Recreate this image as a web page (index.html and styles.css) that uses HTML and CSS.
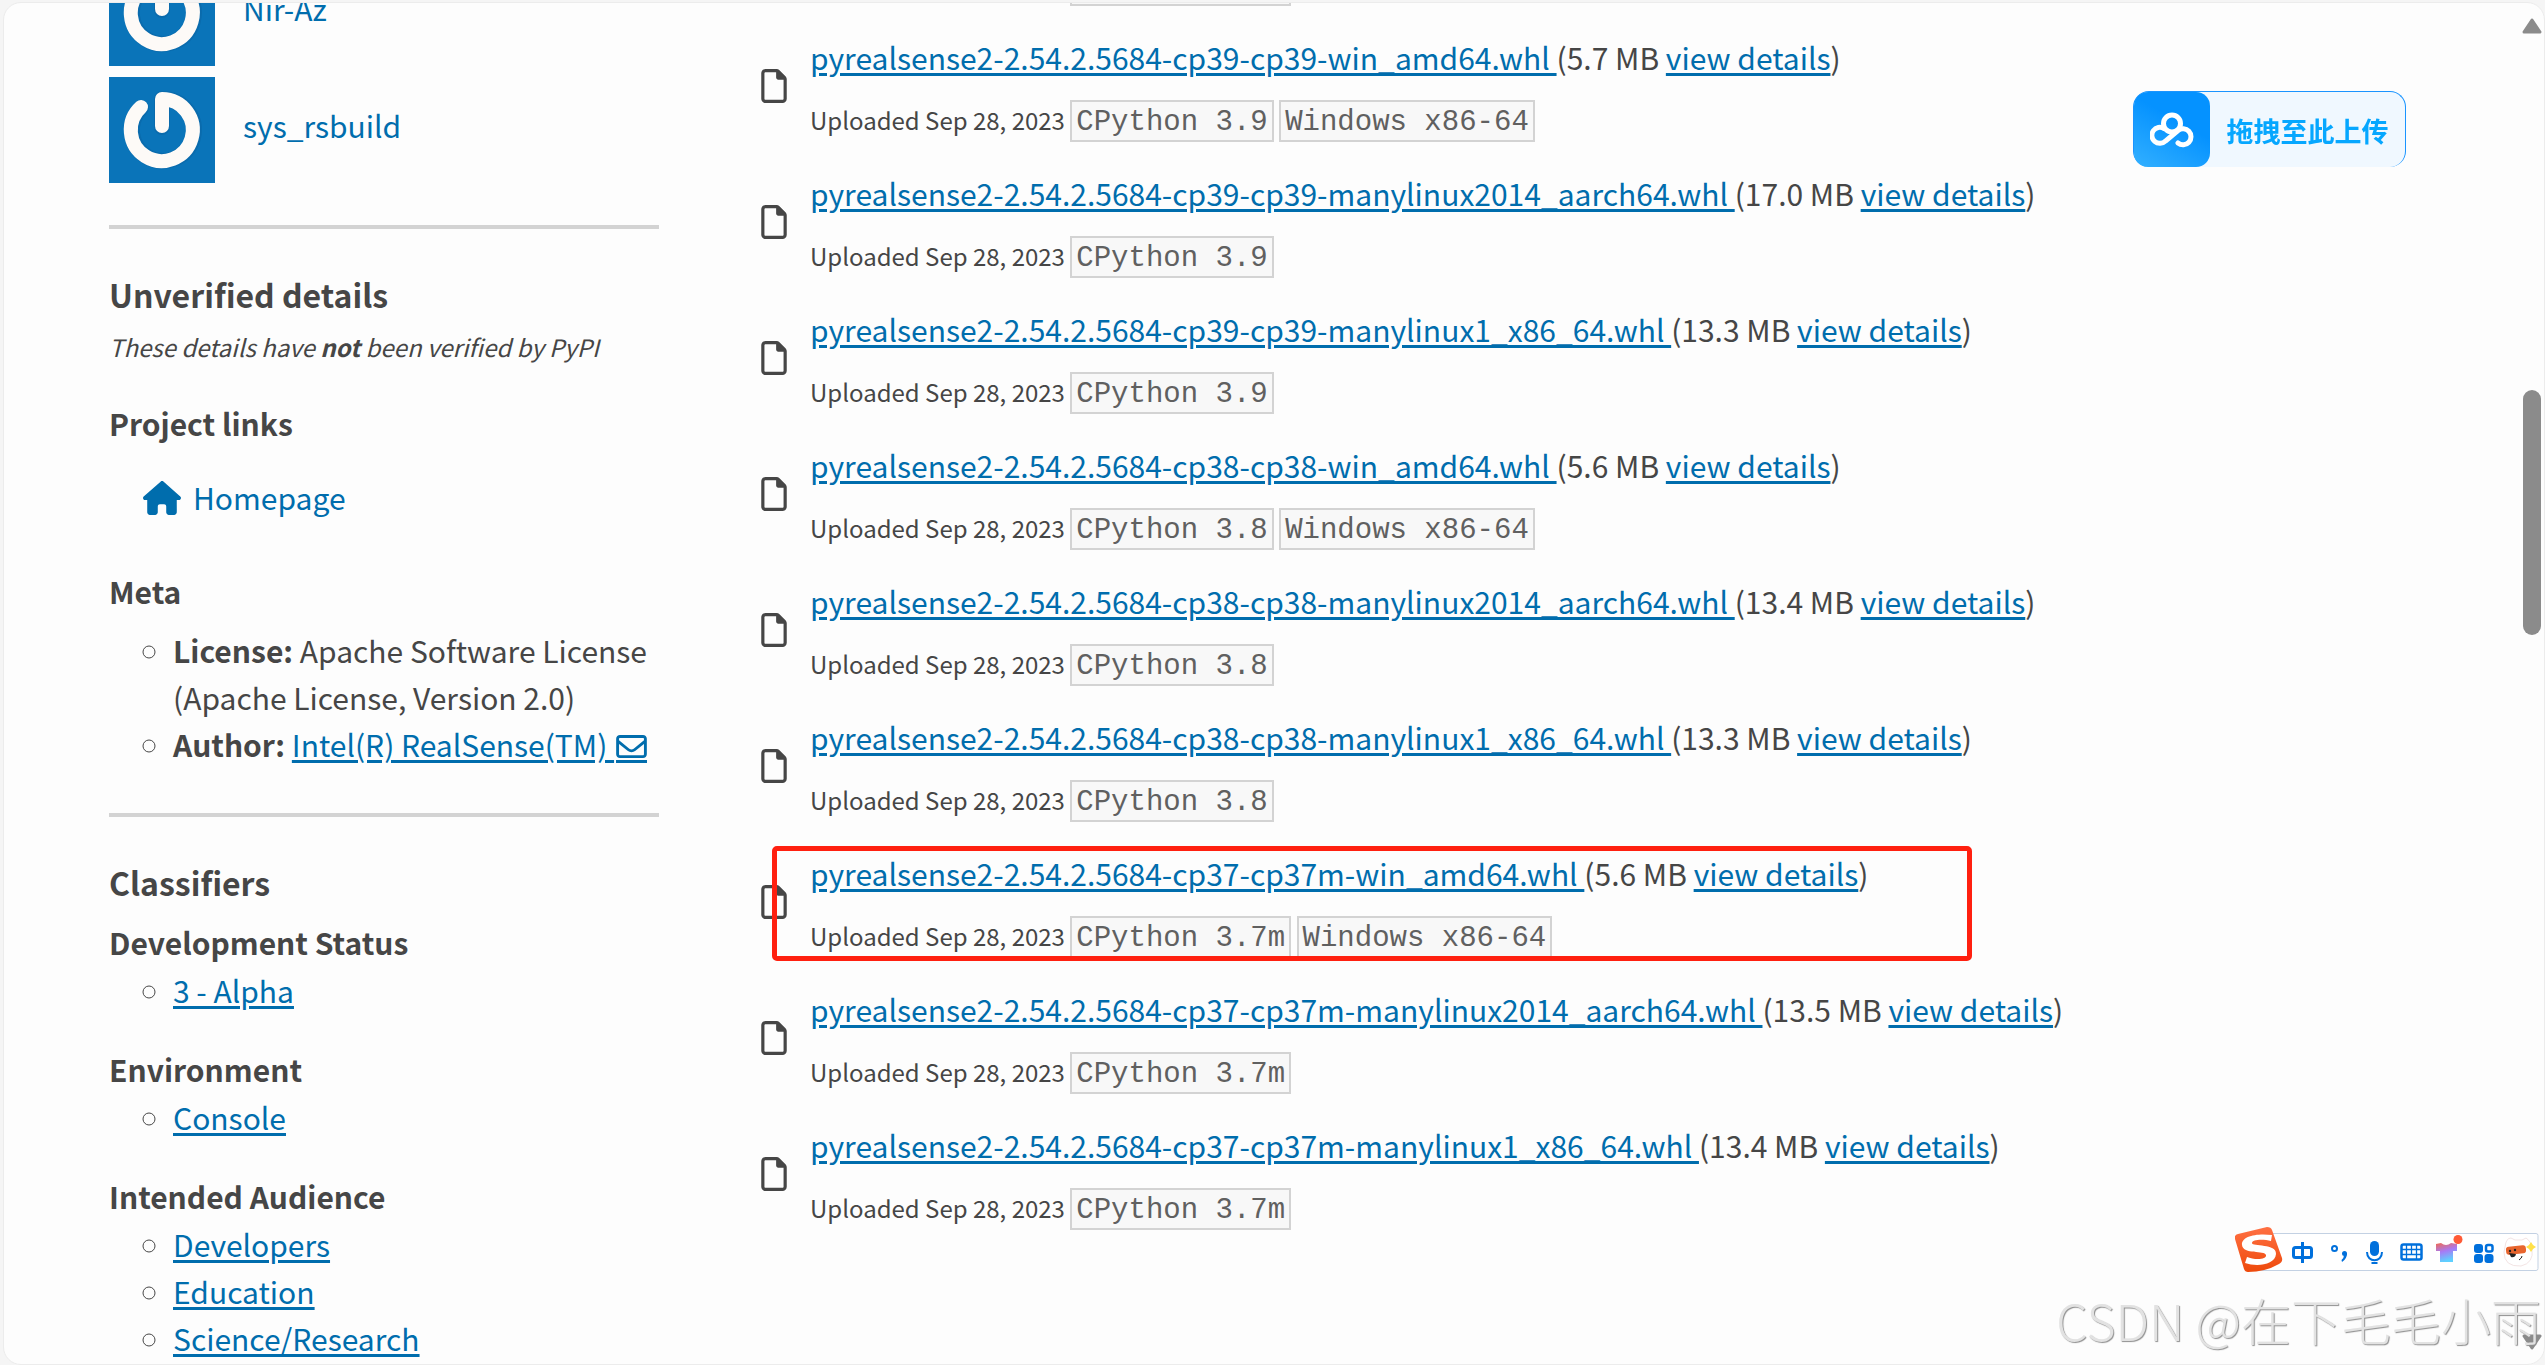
FILE: index.html
```html
<!DOCTYPE html>
<html lang="en">
<head>
<meta charset="utf-8">
<title>pyrealsense2 · PyPI</title>
<link rel="stylesheet" href="styles.css">
</head>
<body>
<svg class="defs" aria-hidden="true">
  <symbol id="file" viewBox="0 0 384 512"><path d="M320 464c8.800 0 16-7.200 16-16V160H256c-17.700 0-32-14.300-32-32V48H64c-8.800 0-16 7.200-16 16V448c0 8.800 7.200 16 16 16H320zM0 64C0 28.700 28.700 0 64 0H229.500c17 0 33.300 6.700 45.300 18.700l90.500 90.500c12 12 18.700 28.300 18.700 45.300V448c0 35.300-28.700 64-64 64H64c-35.300 0-64-28.700-64-64V64z"/></symbol>
  <symbol id="avatar" viewBox="0 0 106 106">
    <rect width="106" height="106" fill="#0a74b9"/>
    <g fill="none" stroke-linecap="round" stroke-linejoin="round">
      <path d="M32 31A31 31 0 1 0 53 22V50" stroke="#0a5f9c" stroke-width="16" opacity=".4"/>
      <path d="M32 30A31 31 0 1 0 53 22V49" stroke="#fdfaf7" stroke-width="14"/>
    </g>
  </symbol>
</svg>
<div class="window">
  <main class="page">
    <aside class="sidebar">
      <div class="people">
        <a class="person" href="#"><svg class="avatar"><use href="#avatar"/></svg><span>Nir-Az</span></a>
        <a class="person" href="#"><svg class="avatar"><use href="#avatar"/></svg><span>sys_rsbuild</span></a>
      </div>
      <section class="block">
        <h3 class="title">Unverified details</h3>
        <p class="note">These details have <strong>not</strong> been verified by PyPI</p>
        <h4 class="subtitle">Project links</h4>
        <a class="home" href="#"><svg class="home-icon" viewBox="0 0 576 512" aria-hidden="true"><path d="M575.800 255.500c0 18-15 32.100-32 32.100h-32l.7 160.200c0 2.700-.2 5.400-.5 8.100V472c0 22.100-17.900 40-40 40H392c-22.100 0-40-17.900-40-40V384c0-17.700-14.300-32-32-32H256c-17.700 0-32 14.300-32 32v88c0 22.100-17.900 40-40 40H104c-22.100 0-40-17.900-40-40V287.600H32c-18 0-32-14-32-32.100c0-9 3-17 10-24L266.400 8c7-7 15-8 22-8s15 2 21 7L564.800 231.500c8 7 12 15 11 24z"/></svg>Homepage</a>
        <h4 class="subtitle">Meta</h4>
        <ul class="list meta">
          <li><strong>License:</strong> Apache Software License (Apache License, Version 2.0)</li>
          <li><strong>Author:</strong> <a href="#">Intel(R) RealSense(TM) <svg class="mail" viewBox="0 64 512 384" aria-hidden="true"><path d="M64 112c-8.800 0-16 7.200-16 16v22.100L220.500 291.700c20.700 17 50.400 17 71.100 0L464 150.100V128c0-8.800-7.200-16-16-16H64zM48 212.200V384c0 8.800 7.200 16 16 16H448c8.800 0 16-7.200 16-16V212.200L322 328.800c-38.400 31.500-93.700 31.500-132 0L48 212.200zM0 128C0 92.700 28.700 64 64 64H448c35.300 0 64 28.700 64 64V384c0 35.300-28.700 64-64 64H64c-35.300 0-64-28.700-64-64V128z"/></svg></a></li>
        </ul>
      </section>
      <section class="block classifiers">
        <h3 class="title">Classifiers</h3>
        <h4 class="subtitle">Development Status</h4>
        <ul class="list"><li><a href="#">3 - Alpha</a></li></ul>
        <h4 class="subtitle">Environment</h4>
        <ul class="list"><li><a href="#">Console</a></li></ul>
        <h4 class="subtitle">Intended Audience</h4>
        <ul class="list">
          <li><a href="#">Developers</a></li>
          <li><a href="#">Education</a></li>
          <li><a href="#">Science/Research</a></li>
        </ul>
      </section>
    </aside>
    <section class="files">
      <p class="info previous">Uploaded Sep 28, 2023 <code>CPython 3.10</code></p>
      <article class="file">
        <svg class="file-icon"><use href="#file"/></svg>
        <div><p class="name"><a href="#">pyrealsense2-2.54.2.5684-cp39-cp39-win_amd64.whl </a>(5.7 MB <a href="#">view details</a>)</p>
        <p class="info">Uploaded Sep 28, 2023 <code>CPython 3.9</code> <code>Windows x86-64</code></p></div>
      </article>
      <article class="file">
        <svg class="file-icon"><use href="#file"/></svg>
        <div><p class="name"><a href="#">pyrealsense2-2.54.2.5684-cp39-cp39-manylinux2014_aarch64.whl </a>(17.0 MB <a href="#">view details</a>)</p>
        <p class="info">Uploaded Sep 28, 2023 <code>CPython 3.9</code></p></div>
      </article>
      <article class="file">
        <svg class="file-icon"><use href="#file"/></svg>
        <div><p class="name"><a href="#">pyrealsense2-2.54.2.5684-cp39-cp39-manylinux1_x86_64.whl </a>(13.3 MB <a href="#">view details</a>)</p>
        <p class="info">Uploaded Sep 28, 2023 <code>CPython 3.9</code></p></div>
      </article>
      <article class="file">
        <svg class="file-icon"><use href="#file"/></svg>
        <div><p class="name"><a href="#">pyrealsense2-2.54.2.5684-cp38-cp38-win_amd64.whl </a>(5.6 MB <a href="#">view details</a>)</p>
        <p class="info">Uploaded Sep 28, 2023 <code>CPython 3.8</code> <code>Windows x86-64</code></p></div>
      </article>
      <article class="file">
        <svg class="file-icon"><use href="#file"/></svg>
        <div><p class="name"><a href="#">pyrealsense2-2.54.2.5684-cp38-cp38-manylinux2014_aarch64.whl </a>(13.4 MB <a href="#">view details</a>)</p>
        <p class="info">Uploaded Sep 28, 2023 <code>CPython 3.8</code></p></div>
      </article>
      <article class="file">
        <svg class="file-icon"><use href="#file"/></svg>
        <div><p class="name"><a href="#">pyrealsense2-2.54.2.5684-cp38-cp38-manylinux1_x86_64.whl </a>(13.3 MB <a href="#">view details</a>)</p>
        <p class="info">Uploaded Sep 28, 2023 <code>CPython 3.8</code></p></div>
      </article>
      <article class="file marked">
        <svg class="file-icon"><use href="#file"/></svg>
        <div><p class="name"><a href="#">pyrealsense2-2.54.2.5684-cp37-cp37m-win_amd64.whl </a>(5.6 MB <a href="#">view details</a>)</p>
        <p class="info">Uploaded Sep 28, 2023 <code>CPython 3.7m</code> <code>Windows x86-64</code></p></div>
      </article>
      <article class="file">
        <svg class="file-icon"><use href="#file"/></svg>
        <div><p class="name"><a href="#">pyrealsense2-2.54.2.5684-cp37-cp37m-manylinux2014_aarch64.whl </a>(13.5 MB <a href="#">view details</a>)</p>
        <p class="info">Uploaded Sep 28, 2023 <code>CPython 3.7m</code></p></div>
      </article>
      <article class="file">
        <svg class="file-icon"><use href="#file"/></svg>
        <div><p class="name"><a href="#">pyrealsense2-2.54.2.5684-cp37-cp37m-manylinux1_x86_64.whl </a>(13.4 MB <a href="#">view details</a>)</p>
        <p class="info">Uploaded Sep 28, 2023 <code>CPython 3.7m</code></p></div>
      </article>
    </section>
  </main>
</div>

<div class="scrollbar" aria-hidden="true">
  <svg class="arrow" viewBox="0 0 20 18"><path d="M10 3L18 15H2Z"/></svg>
  <div class="track"><div class="thumb"></div></div>
  <svg class="arrow" viewBox="0 0 20 18"><path d="M10 15L18 3H2Z"/></svg>
</div>

<button class="upload" type="button" lang="zh-CN">
  <span class="upload-logo"><svg viewBox="0 0 44 36" aria-hidden="true"><g fill="none" stroke="#fff" stroke-width="5" stroke-linecap="round"><circle cx="22" cy="11.500" r="8.500"/><path d="M28 31A8 8 0 1 0 28 18.500L15.500 29A8 8 0 1 1 14 16.500"/></g></svg></span>
  <span class="upload-text">拖拽至此上传</span>
</button>

<div class="ime" aria-hidden="true">
  <svg viewBox="0 0 304 46">
    <defs>
      <linearGradient id="s" x1="0" y1="0" x2="0" y2="1"><stop offset="0" stop-color="#ff7043"/><stop offset="1" stop-color="#ee4a0c"/></linearGradient>
      <linearGradient id="t" x1="0" y1="0" x2="0.300" y2="1"><stop offset="0" stop-color="#f2694e"/><stop offset=".5" stop-color="#a77af5"/><stop offset="1" stop-color="#5fd0ff"/></linearGradient>
    </defs>
    <rect x="20" y="6.500" width="283" height="37" rx="2" fill="#fff" stroke="#c3d1e3"/>
    <path d="M3 7L32 0Q36 0 37 3L47 31Q48 35 44 37Q30 45 13 45Q10 45 9 42L0 12Q-1 8 3 7Z" fill="url(#s)"/>
    <path d="M37 8L36 14C29 12 17 12 17 16C17 20 42 16 41 27C40 38 22 40 10 36L12 30C19 33 32 33 31 28C30 23 8 28 7 18C6 9 22 6 37 8Z" fill="#fff"/>
    <g fill="none" stroke="#0070dc" stroke-width="3">
      <rect x="58.500" y="20.500" width="18" height="10" rx="2"/><path d="M67.500 15V36"/>
      <circle cx="99.500" cy="21.500" r="2.500" stroke-width="2"/>
      <path d="M132 25C132 36 147 36 147 25M136.500 36H142.500" stroke-width="2"/>
      <rect x="166.500" y="17.500" width="20" height="15" rx="2" stroke-width="2.500"/>
      <path d="M167 22.500H186M167 27.500H186M171.500 18V28M176.500 18V28M181.500 18V28M171.500 27V32M181.500 27V32" stroke-width="1.300"/>
    </g>
    <g fill="#0070dc">
      <circle cx="109.500" cy="26.500" r="2.500"/><path d="M112 26Q112 32 107 35L106.500 33Q109 31 109 28Z"/>
      <rect x="135" y="14" width="9" height="15" rx="4.500"/>
      <rect x="239" y="17" width="9" height="9" rx="3"/><rect x="239" y="27" width="9" height="9" rx="3"/><rect x="249.500" y="27" width="9" height="9" rx="3"/>
      <rect x="251" y="18" width="6.500" height="6.500" rx="2" fill="none" stroke="#0070dc" stroke-width="2.500"/>
    </g>
    <path d="M201 17L206 16Q211 20 216 16L222 17V24H218V35H205V24H201Z" fill="url(#t)"/>
    <circle cx="223" cy="12.500" r="4.500" fill="#ff5a36"/>
    <path d="M270 20Q271 11 276 11L280 13H287L291 11Q296 14 297 22Q299 36 286 39Q269 40 269 25Z" fill="#fff" stroke="#f3e4e4"/>
    <rect x="271" y="19" width="20" height="8" rx="3" fill="#e8652e" transform="rotate(-6 281 23)"/>
    <path d="M274 26L281 27Q280 31 276 30Z" fill="#222"/>
    <circle cx="275" cy="24" r="1.200" fill="#222"/><circle cx="280" cy="23" r="1.200" fill="#222"/>
    <path d="M284 33Q287 31 287 29" stroke="#222" fill="none"/>
    <path d="M296 15L298 18L301 20L298 22L296 25L294 22L291 20L294 18Z" fill="#ffe14a"/>
  </svg>
</div>
<div class="watermark" lang="zh-CN">CSDN @在下毛毛小雨</div>
</body>
</html>
```
FILE: styles.css
```css
*, *::after { box-sizing: border-box; }

body {
  margin: 0;
  background: #f5f5f5;
  color: #464646;
  font-family: "Noto Sans CJK SC", "Open Sans", sans-serif;
  font-size: 30px;
  line-height: 47px;
}

h3, h4, p, ul { margin: 0; padding: 0; }
a { color: #006dad; text-decoration-thickness: 3px; text-underline-offset: 3px; }
svg { display: block; fill: currentColor; }
strong { font-weight: 700; }
.defs { display: none; }

.window {
  height: 100vh;
  overflow: hidden;
  padding: 2px 0 0 3px;
}

.page {
  display: grid;
  grid-template-columns: 550px 1fr;
  column-gap: 102px;
  height: 100%;
  overflow: hidden;
  padding-left: 105px;
  background: #fdfdfd;
  border: 1px solid #ececec;
  border-radius: 18px;
}

/* Sidebar */
.people { margin-top: -43px; display: grid; gap: 11px; }
.person {
  display: flex;
  align-items: center;
  gap: 28px;
  text-decoration: none;
}
.person span { padding-bottom: 10px; }
.avatar { width: 106px; height: 106px; }

.block { margin-top: 42px; padding-top: 42px; border-top: 4px solid #d3d3d3; }
.title { font-size: 32px; font-weight: 600; }
.subtitle { font-size: 30px; font-weight: 600; }
.note { font-size: 24px; font-style: italic; margin: 5px 0 30px; }
.home {
  display: flex;
  align-items: center;
  gap: 12px;
  margin: 27px 0 47px 34px;
  text-decoration: none;
}
.home-icon { width: 38px; height: 34px; }
.list { list-style: circle; padding-left: 64px; margin-bottom: 32px; }
.meta { margin: 12px 0 0; }
.mail {
  display: inline-block;
  width: 31px;
  height: 28px;
  margin-left: 2px;
  padding-bottom: 2px;
  border-bottom: 3px solid;
  vertical-align: -6px;
}
.classifiers { margin-top: 45px; }
.classifiers .title { margin-bottom: 13px; }
.classifiers .subtitle { margin-bottom: 1px; }

/* File list */
.files { margin-top: -43px; }
.file {
  position: relative;
  display: flex;
  align-items: center;
  gap: 23px;
  height: 136px;
  white-space: nowrap;
}
.file-icon { flex: none; width: 26px; height: 34px; margin-bottom: 5px; }
.info { margin-top: 15px; font-size: 24px; }
.previous { margin: 0 0 13px 49px; }
code {
  display: inline-block;
  padding: 3px 4px 0;
  border: 2px solid #d3d3d3;
  background: #f8f8f8;
  color: #606060;
  font-family: "Liberation Mono", monospace;
  font-size: 29px;
  line-height: 35px;
}
.marked::after {
  content: "";
  position: absolute;
  top: 10px;
  left: 11px;
  width: 1200px;
  height: 115px;
  border: 5px solid #ff2010;
  border-radius: 5px;
}

/* Scrollbar */
.scrollbar {
  position: fixed;
  inset: 17px 3px 14px auto;
  width: 20px;
  display: flex;
  flex-direction: column;
  color: #8b8b8b;
}
.arrow { width: 20px; height: 18px; stroke: currentColor; stroke-width: 3; stroke-linejoin: round; }
.track { flex: 1; display: flex; flex-direction: column; padding: 355px 1px 0; }
.thumb { height: 26%; border-radius: 9px; background: #8b8b8b; }

/* Upload drop target */
.upload {
  position: fixed;
  top: 91px;
  right: 139px;
  display: flex;
  align-items: center;
  width: 273px;
  height: 76px;
  padding: 0;
  border: 1px solid #1a94ff;
  border-bottom: 0;
  border-radius: 16px;
  background: #f0f8ff;
  color: #06a7ff;
}
.upload-logo {
  display: grid;
  place-items: center;
  width: 76px;
  height: 100%;
  border-radius: 14px;
  background: linear-gradient(30deg, #33b0ff, #0592ff 60%);
}
.upload-logo svg { width: 44px; height: 36px; }
.upload-text {
  flex: 1;
  padding-top: 2px;
  font: 700 27px/40px "Noto Sans CJK SC", sans-serif;
}

/* Input method bar and watermark */
.ime { position: fixed; right: 6px; bottom: 92px; width: 304px; height: 46px; }
.watermark {
  position: fixed;
  right: 4px;
  bottom: 14px;
  color: #e2e2e2;
  font-size: 50px;
  font-weight: 300;
  line-height: 64px;
  white-space: nowrap;
  text-shadow: 1px 1px 1px #8f8f8f;
}
```
